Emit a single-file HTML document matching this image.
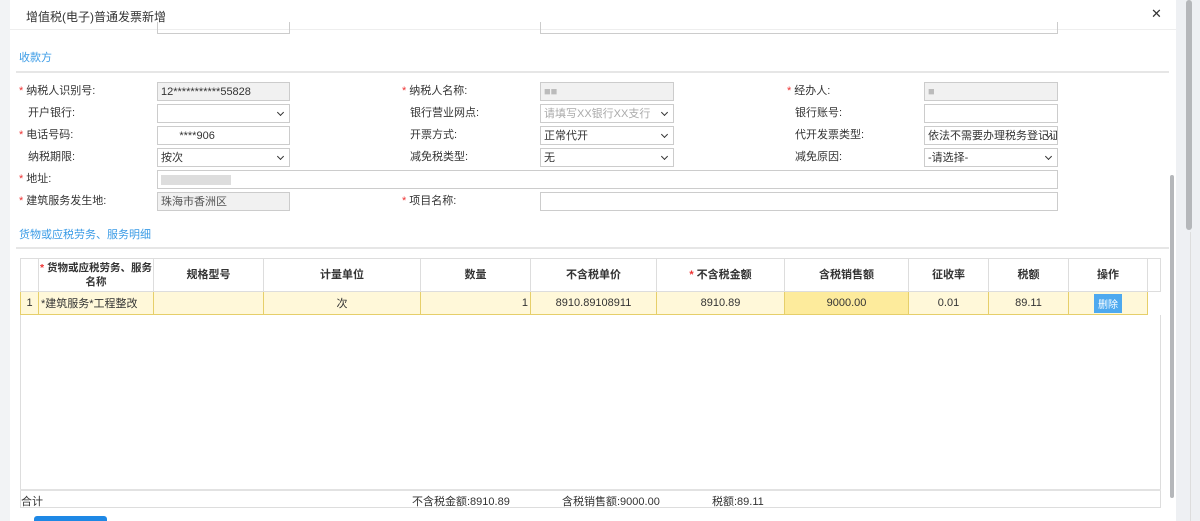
<!DOCTYPE html>
<html><head><meta charset="utf-8"><style>
*{box-sizing:border-box;margin:0;padding:0}
html,body{width:1200px;height:521px;overflow:hidden}
body{background:#eef0f3;font-family:"Liberation Sans","Noto Sans CJK SC",sans-serif;font-size:11px;color:#333;position:relative}
.a{position:absolute}
.modal{left:0;top:0;width:1176px;height:521px;background:#fff;overflow:hidden}
.inp{position:absolute;height:19px;border:1px solid #ccc;background:#fff;font-size:11px;line-height:18px;padding-left:3px;color:#333;white-space:nowrap;overflow:hidden}
.ro{background:#f1f1f1}
.sel{padding-right:14px}
.sel::after{content:"";position:absolute;right:6px;top:5px;width:4px;height:4px;border-right:1.5px solid #333;border-bottom:1.5px solid #333;transform:rotate(45deg)}
.lb{position:absolute;font-size:11px;color:#333;line-height:13px}
.st{color:#e33;margin-right:3px}
.blue{color:#3a9be6}
table{border-collapse:collapse;position:absolute;left:20px;top:258px;font-size:11px;table-layout:fixed}
td,th{border:1px solid #ddd;text-align:center;font-weight:bold;color:#333;white-space:nowrap;overflow:hidden;padding:0}
th{height:33px;line-height:14px}
tr.r td{height:23px;background:#fff8d9;border:1px solid #e6cf6a;font-weight:normal}
</style></head><body>
<div class="a" style="left:1186px;top:0;width:6px;height:230px;background:#b5b7ba;border-radius:3px"></div>
<div class="a" style="left:1190px;top:232px;width:1px;height:289px;background:#ddd"></div>
<div class="a modal">
<div class="a" style="left:0;top:0;width:10px;height:521px;background:#f2f3f5"></div>
<div class="a" style="left:26px;top:8px;font-size:12px;color:#333">增值税(电子)普通发票新增</div>
<div class="a" style="left:1151px;top:6px;font-size:13px;color:#333">✕</div>
<div class="a" style="left:10px;top:29px;width:1166px;height:1px;background:#eee"></div>
<div class="a" style="left:157px;top:22px;width:133px;height:12px;border:1px solid #ccc;border-top:none"></div>
<div class="a" style="left:540px;top:22px;width:518px;height:12px;border:1px solid #ccc;border-top:none"></div>
<div class="a blue" style="left:19px;top:49px;font-size:11px">收款方</div>
<div class="a" style="left:16px;top:71px;width:1153px;height:2px;background:#e6e6e6"></div>

<div class="lb" style="left:19px;top:85px"><span class="st">*</span>纳税人识别号:</div>
<div class="inp ro" style="left:157px;top:82px;width:133px">12***********55828</div>
<div class="lb" style="left:402px;top:85px"><span class="st">*</span>纳税人名称:</div>
<div class="inp ro" style="left:540px;top:82px;width:134px;color:#bbb">■■</div>
<div class="lb" style="left:787px;top:85px"><span class="st">*</span>经办人:</div>
<div class="inp ro" style="left:924px;top:82px;width:134px;color:#bbb">■</div>

<div class="lb" style="left:28px;top:107px">开户银行:</div>
<div class="inp sel" style="left:157px;top:104px;width:133px"></div>
<div class="lb" style="left:410px;top:107px">银行营业网点:</div>
<div class="inp sel" style="left:540px;top:104px;width:134px;color:#aaa">请填写XX银行XX支行</div>
<div class="lb" style="left:795px;top:107px">银行账号:</div>
<div class="inp" style="left:924px;top:104px;width:134px"></div>

<div class="lb" style="left:19px;top:129px"><span class="st">*</span>电话号码:</div>
<div class="inp" style="left:157px;top:126px;width:133px">&nbsp;&nbsp;&nbsp;&nbsp;&nbsp;&nbsp;****906</div>
<div class="lb" style="left:410px;top:129px">开票方式:</div>
<div class="inp sel" style="left:540px;top:126px;width:134px">正常代开</div>
<div class="lb" style="left:795px;top:129px">代开发票类型:</div>
<div class="inp sel" style="left:924px;top:126px;width:134px">依法不需要办理税务登记证</div>

<div class="lb" style="left:28px;top:151px">纳税期限:</div>
<div class="inp sel" style="left:157px;top:148px;width:133px">按次</div>
<div class="lb" style="left:410px;top:151px">减免税类型:</div>
<div class="inp sel" style="left:540px;top:148px;width:134px">无</div>
<div class="lb" style="left:795px;top:151px">减免原因:</div>
<div class="inp sel" style="left:924px;top:148px;width:134px">-请选择-</div>

<div class="lb" style="left:19px;top:173px"><span class="st">*</span>地址:</div>
<div class="inp" style="left:157px;top:170px;width:901px"><span style="display:inline-block;width:70px;height:10px;background:#ddd;vertical-align:middle"></span></div>
<div class="lb" style="left:19px;top:195px"><span class="st">*</span>建筑服务发生地:</div>
<div class="inp ro" style="left:157px;top:192px;width:133px;color:#555">珠海市香洲区</div>
<div class="lb" style="left:402px;top:195px"><span class="st">*</span>项目名称:</div>
<div class="inp" style="left:540px;top:192px;width:518px"></div>

<div class="a blue" style="left:19px;top:226px;font-size:11px">货物或应税劳务、服务明细</div>
<div class="a" style="left:16px;top:247px;width:1153px;height:2px;background:#e6e6e6"></div>
<div class="a" style="left:20px;top:258px;width:1141px;height:250px;border:1px solid #ddd"></div>

<table>
<colgroup><col style="width:18px"><col style="width:115px"><col style="width:110px"><col style="width:157px"><col style="width:110px"><col style="width:126px"><col style="width:128px"><col style="width:124px"><col style="width:80px"><col style="width:80px"><col style="width:79px"><col style="width:13px"></colgroup>
<tr><th></th><th style="font-size:10.5px"><span class="st">*</span>货物或应税劳务、服务<br>名称</th><th>规格型号</th><th>计量单位</th><th>数量</th><th>不含税单价</th><th><span class="st">*</span>不含税金额</th><th>含税销售额</th><th>征收率</th><th>税额</th><th>操作</th><th style="border-right:none"></th></tr>
<tr class="r"><td>1</td><td style="text-align:left;padding-left:2px">*建筑服务*工程整改</td><td></td><td>次</td><td style="text-align:right;padding-right:2px">1</td><td>8910.89108911</td><td>8910.89</td><td style="background:#fdeb9c">9000.00</td><td>0.01</td><td>89.11</td><td><span style="display:inline-block;background:#4ea9ef;color:#fff;padding:2px 4px;font-size:10px">删除</span></td><td style="background:#fff;border:none;border-left:1px solid #e6cf6a"></td></tr>
</table>
<div class="a" style="left:20px;top:489px;width:1141px;height:2px;background:#e2e2e2"></div>
<div class="a" style="left:21px;top:493px">合计</div>
<div class="a" style="left:412px;top:493px">不含税金额:8910.89</div>
<div class="a" style="left:562px;top:493px">含税销售额:9000.00</div>
<div class="a" style="left:712px;top:493px">税额:89.11</div>
<div class="a" style="left:34px;top:516px;width:73px;height:10px;background:#1e88e5;border-radius:3px"></div>
<div class="a" style="left:1170px;top:175px;width:4px;height:323px;background:#b5b7ba;border-radius:2px"></div>
</div>
</body></html>
